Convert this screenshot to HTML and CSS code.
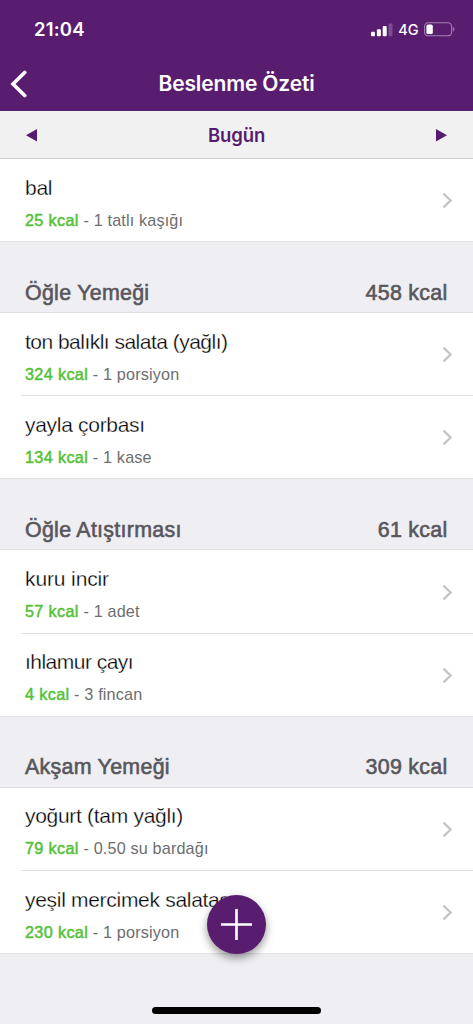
FILE: index.html
```html
<!DOCTYPE html>
<html lang="tr">
<head>
<meta charset="utf-8">
<title>Beslenme Özeti</title>
<link rel="stylesheet" href="styles.css">
</head>
<body>
<div class="screen">
  <header class="top">
    <div class="status">
      <span class="clock">21:04</span>
      <span class="indicators">
        <svg class="signal" width="22" height="14" viewBox="0 0 22 14" fill="#fff"><rect x="0" y="8.8" width="4" height="4.4" rx="1"/><rect x="5.9" y="6.2" width="4" height="7" rx="1"/><rect x="11.7" y="3" width="4" height="10.2" rx="1"/><rect x="17.5" y="0.4" width="4" height="12.8" rx="1" opacity=".22"/></svg>
        <span class="network">4G</span>
        <svg class="battery" width="31" height="15" viewBox="0 0 31 15"><rect x=".6" y=".8" width="27" height="13" rx="3.6" fill="none" stroke="#fff" stroke-opacity=".45" stroke-width="1.1"/><rect x="2.4" y="2.6" width="6.4" height="9.4" rx="1.6" fill="#fff"/><path d="M29.2 5v4.6c1.6-.6 1.6-4 0-4.6z" fill="#fff" fill-opacity=".5"/></svg>
      </span>
    </div>
    <div class="nav">
      <svg class="back" width="18" height="28" viewBox="0 0 18 28"><path d="M14.7 2.5 3 14l11.7 11.5" fill="none" stroke="#fff" stroke-width="3.6" stroke-linecap="round" stroke-linejoin="miter"/></svg>
      <h1 class="title">Beslenme Özeti</h1>
    </div>
  </header>
  <nav class="day">
    <svg class="arrow" width="11" height="13" viewBox="0 0 11 13"><path d="M11 0v12.6L0 6.3z" fill="#571c70"/></svg>
    <span class="day-name">Bugün</span>
    <svg class="arrow" width="11" height="13" viewBox="0 0 11 13"><path d="M0 0v12.6l11-6.3z" fill="#571c70"/></svg>
  </nav>
  <main class="list">
    <div class="row last"><div class="food"><div class="name">bal</div><div class="detail"><b class="kcal">25 kcal</b> - 1 tatlı kaşığı</div></div><svg class="chev" width="11" height="17" viewBox="0 0 11 17"><path d="M1.5 1.7 8.6 8.5l-7.1 6.8"/></svg></div>

    <h2 class="meal"><span>Öğle Yemeği</span><span>458 kcal</span></h2>
    <div class="row"><div class="food"><div class="name tight">ton balıklı salata (yağlı)</div><div class="detail"><b class="kcal">324 kcal</b> - 1 porsiyon</div></div><svg class="chev" width="11" height="17" viewBox="0 0 11 17"><path d="M1.5 1.7 8.6 8.5l-7.1 6.8"/></svg></div>
    <div class="row last"><div class="food"><div class="name">yayla çorbası</div><div class="detail"><b class="kcal">134 kcal</b> - 1 kase</div></div><svg class="chev" width="11" height="17" viewBox="0 0 11 17"><path d="M1.5 1.7 8.6 8.5l-7.1 6.8"/></svg></div>

    <h2 class="meal"><span>Öğle Atıştırması</span><span>61 kcal</span></h2>
    <div class="row"><div class="food"><div class="name loose">kuru incir</div><div class="detail"><b class="kcal">57 kcal</b> - 1 adet</div></div><svg class="chev" width="11" height="17" viewBox="0 0 11 17"><path d="M1.5 1.7 8.6 8.5l-7.1 6.8"/></svg></div>
    <div class="row last"><div class="food"><div class="name tight">ıhlamur çayı</div><div class="detail"><b class="kcal">4 kcal</b> - 3 fincan</div></div><svg class="chev" width="11" height="17" viewBox="0 0 11 17"><path d="M1.5 1.7 8.6 8.5l-7.1 6.8"/></svg></div>

    <h2 class="meal"><span>Akşam Yemeği</span><span>309 kcal</span></h2>
    <div class="row"><div class="food"><div class="name">yoğurt (tam yağlı)</div><div class="detail"><b class="kcal">79 kcal</b> - 0.50 su bardağı</div></div><svg class="chev" width="11" height="17" viewBox="0 0 11 17"><path d="M1.5 1.7 8.6 8.5l-7.1 6.8"/></svg></div>
    <div class="row last"><div class="food"><div class="name">yeşil mercimek salatası</div><div class="detail"><b class="kcal">230 kcal</b> - 1 porsiyon</div></div><svg class="chev" width="11" height="17" viewBox="0 0 11 17"><path d="M1.5 1.7 8.6 8.5l-7.1 6.8"/></svg></div>
  </main>
  <button class="add" aria-label="Ekle"><svg width="31" height="31" viewBox="0 0 31 31"><path d="M15.5 0v31M0 15.5h31" stroke="#fff" stroke-width="2.6"/></svg></button>
  <div class="home"></div>
</div>
</body>
</html>
```
FILE: styles.css
```css
* { box-sizing: border-box; }
body { margin: 0; }
.screen {
  position: relative;
  width: 473px;
  height: 1024px;
  overflow: hidden;
  background: #efeef3;
  font-family: "Liberation Sans", Arial, sans-serif;
}
.top { height: 111px; background: #591d70; color: #fff; font-family: Inter, sans-serif; }
.status { display: flex; justify-content: space-between; align-items: center; height: 56px; padding: 2px 18px 0 34px; }
.clock { font-size: 18.5px; font-weight: 600; letter-spacing: .2px; }
.indicators { display: flex; align-items: center; }
.signal { margin-top: 1px; }
.network { margin: 0 5.5px; font-size: 14.5px; font-weight: 500; }
.nav { display: grid; grid-template-columns: 39px 1fr 39px; align-items: center; height: 55px; padding-left: 10px; padding-right: 10px; }
.title { margin: 0; text-align: center; font-size: 21px; font-weight: 600; letter-spacing: -.15px; white-space: nowrap; }
.day { display: flex; justify-content: space-between; align-items: center; height: 48px; padding: 1px 26px 0; background: #f1f1f1; border-bottom: 1px solid #cbcbcd; }
.day-name { font-family: Inter, sans-serif; font-size: 18.5px; font-weight: 600; letter-spacing: -.1px; color: #571c70; }
.row { display: flex; justify-content: space-between; align-items: center; height: 83.17px; padding: 0 20px 0 25px; background: linear-gradient(#e2e1e4, #e2e1e4) 21px 100% / 100% 1px no-repeat #fff; }
.row.last { background-position: 0 100%; }
.food { padding-top: 3px; }
.name { font-size: 21px; line-height: 26px; letter-spacing: -.3px; color: #000; -webkit-text-stroke: .3px #fff; white-space: nowrap; }
.tight { letter-spacing: -.52px; }
.loose { letter-spacing: -.12px; }
.detail { margin-top: 9px; font-size: 16.2px; line-height: 20px; letter-spacing: .16px; color: #6d6d6f; white-space: nowrap; }
.kcal { font-weight: 400; letter-spacing: .36px; color: #55c138; -webkit-text-stroke: .5px #55c138; }
.chev { fill: none; stroke: #c5c5c9; stroke-width: 2.4; }
.meal { display: flex; justify-content: space-between; align-items: flex-end; height: 71px; margin: 0; padding: 0 25.5px 6.5px 25px; border-bottom: 1px solid #e1e0e5; font-size: 21.4px; line-height: 25px; font-weight: 400; letter-spacing: .28px; color: #58575c; -webkit-text-stroke: .6px #58575c; }
.add { position: absolute; left: 207px; top: 895px; width: 59px; height: 59px; display: grid; place-items: center; padding: 0; border: 0; border-radius: 50%; background: #591d70; box-shadow: 0 4px 9px rgba(0,0,0,.42); }
.home { position: absolute; left: 152px; top: 1007px; width: 169px; height: 7px; border-radius: 4px; background: #000; }
```
